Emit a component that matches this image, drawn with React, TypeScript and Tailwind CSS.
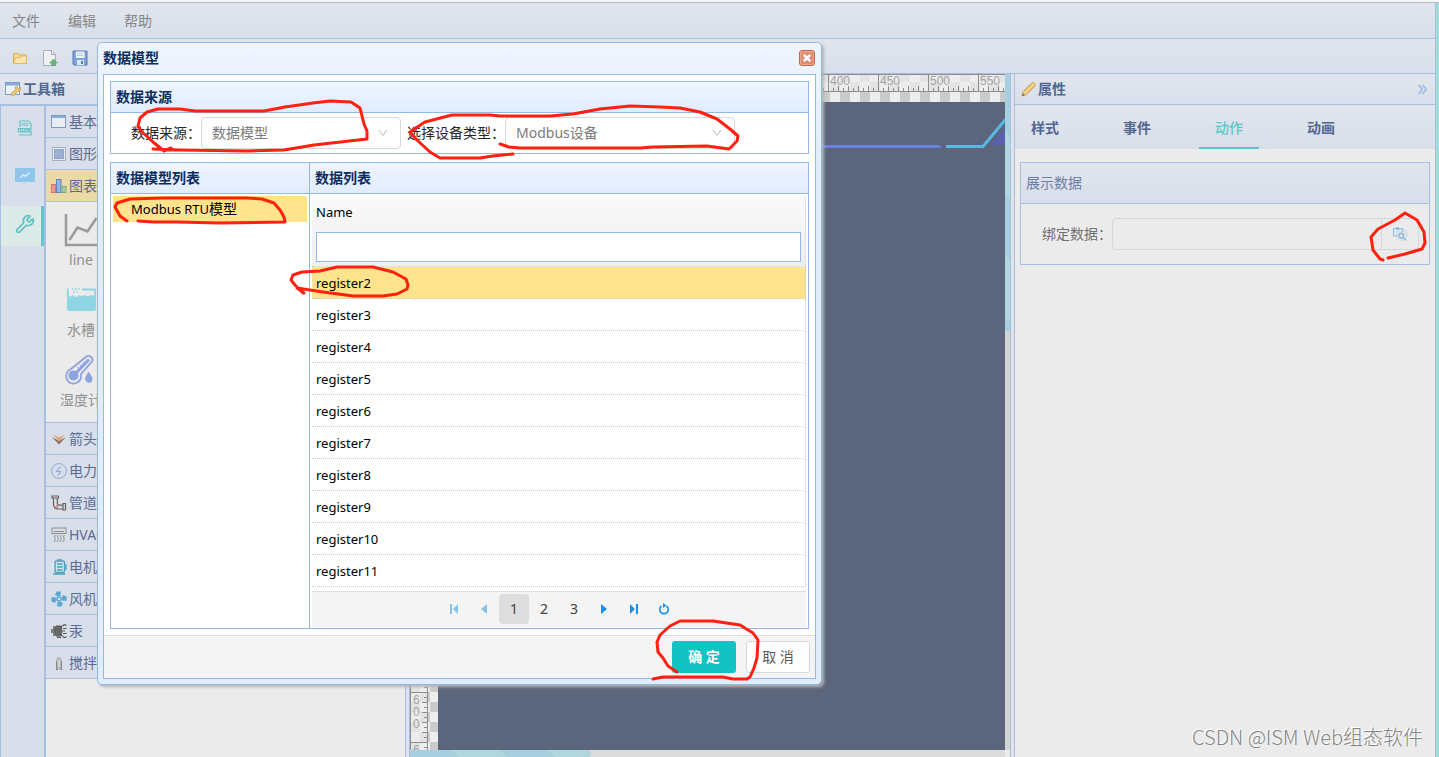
import type { ReactNode } from "react";
import { Wrench } from "lucide-react";
import { AiOutlineDoubleRight, AiOutlineDown } from "react-icons/ai";

const menus = ["文件", "编辑", "帮助"];

const registers = [2, 3, 4, 5, 6, 7, 8, 9, 10, 11].map((n) => `register${n}`);

const strokes = [
  "M171 148 L164 151 L153 142 L142 132 L138 126 L140 118 L147 112 L158 109 L180 109 L195 111 L264 111 L285 107 L313 103 L330 101 L351 102 L360 108 L364 124 L367 131 L367 139 L314 145 L284 150 L247 151 L180 150 L153 149",
  "M513 154 L493 156 L480 158 L440 158 L430 152 L417 140 L410 132 L425 122 L452 115 L490 115 L500 116 L550 116 L573 114 L600 109 L630 106 L660 107 L680 108 L700 112 L717 119 L730 129 L738 136 L737 141 L729 149 L707 146 L653 147 L640 148 L520 148 L509 147 L500 144",
  "M127 221 L120 216 L115 207 L117 203 L130 199 L163 198 L247 198 L262 199 L274 203 L280 210 L284 217 L285 222 L220 223 L177 222 L153 222 L138 221",
  "M303 293 L295 285 L291 280 L293 275 L302 272 L320 271 L337 267 L373 267 L393 272 L406 279 L408 285 L407 289 L397 294 L383 296 L353 296 L323 292 L297 288 L304 293",
  "M677 672 L668 666 L663 658 L658 652 L657 642 L660 635 L670 626 L680 621 L713 621 L740 625 L753 633 L758 640 L757 658 L754 668 L750 677 L747 679 L733 679 L723 677 L663 677 L653 679",
  "M1383 260 L1380 259 L1373 250 L1371 237 L1378 229 L1395 220 L1405 213 L1417 220 L1424 232 L1425 243 L1422 249 L1405 254 L1388 258",
];

function Annotations() {
  return (
    <svg className="pointer-events-none absolute top-0 left-0 z-20" width="1439" height="757" fill="none" stroke="#ff2010" strokeWidth="3" strokeLinejoin="round" strokeLinecap="round" aria-hidden="true">
      {strokes.map((d) => (
        <path key={d} d={d} />
      ))}
    </svg>
  );
}

function Svg({ size = 16, children }: { size?: number; children: ReactNode }) {
  return (
    <svg width={size} height={size} viewBox="0 0 16 16" fill="none" className="shrink-0" aria-hidden="true">
      {children}
    </svg>
  );
}

const FolderIcon = () => (
  <Svg>
    <path d="M1.5 13.5v-10h5l1 1.5h7v8.500z" fill="#f3d993" stroke="#d9ad58" />
    <path d="M1.500 13.500l2-6h5l1-1.500h5v7.500z" fill="#f8e6ae" stroke="#dfb766" />
  </Svg>
);

const PageIcon = () => (
  <Svg>
    <path d="M1.500 .500h8l4 4v11h-12z" fill="#eef0f2" stroke="#a9afb6" />
    <path d="M9.500 .500v4h4" stroke="#a9afb6" />
    <path d="M11.500 9l4 4h-2v2.500h-4v-2.500h-2z" fill="#6cb377" stroke="#5c9f68" strokeWidth=".6" />
  </Svg>
);

const SaveIcon = () => (
  <Svg>
    <path d="M1 1h14v14h-13l-1-1z" fill="#7fa2d8" stroke="#5379b8" />
    <rect x="4" y="1.500" width="8.500" height="6.500" fill="#eef3fa" />
    <path d="M5 3.500h6M5 5.500h6" stroke="#b9cbe6" />
    <rect x="5" y="10" width="7" height="5" fill="#dfe7f3" />
    <rect x="9" y="11" width="2" height="3" fill="#5379b8" />
  </Svg>
);

const ToolboxIcon = () => (
  <Svg>
    <rect x=".5" y="1.500" width="14" height="12" fill="#eef2f8" stroke="#7f9cc8" />
    <rect x="1" y="2" width="13" height="2.500" fill="#83abe0" />
    <path d="M7 15l-.5-3 4-3.500-.5-2.500 2-1 .5 2 2 .5 1-1.500.5 3-2 1.500-1.500-.2-3 3.700z" fill="#ecc77a" stroke="#cf9d4e" strokeWidth=".7" />
  </Svg>
);

const PencilIcon = () => (
  <Svg>
    <path d="M1 15l1.200-4.500 9-9c1-.8 3.800 1.800 3.200 3l-9 9z" fill="#f2d586" stroke="#cd9b55" />
    <path d="M3.500 10.500l8-8M5.500 12.500l8-8" stroke="#dfb865" />
    <path d="M1 15l.8-3 2.200 2.200z" fill="#8a6c50" />
  </Svg>
);

const CloseIcon = () => (
  <svg width="16" height="16" viewBox="0 0 16 16" fill="none" aria-hidden="true">
    <rect x=".5" y=".5" width="15" height="15" rx="2.500" fill="#e08c72" stroke="#b9684f" />
    <rect x="1.500" y="1.500" width="13" height="13" rx="1.500" stroke="#eda98f" />
    <path d="M4.800 4.800l6.400 6.400M11.200 4.800l-6.400 6.400" stroke="#fff" strokeWidth="2.600" />
  </svg>
);

const HtmlIcon = () => (
  <Svg>
    <path d="M3 7V1h8.500l2.500 2.500v11.500H3v-1" stroke="#63c3c3" strokeWidth="1.200" />
    <rect x=".8" y="8" width="12" height="4.500" fill="#63c3c3" />
    <path d="M2.500 9v2.500M4.500 9v2.500M2.500 10.300h2M5.500 9.300h2M6.500 9.300v2.200M8.300 11.500v-2l1 1 1-1v2" stroke="#dbe4ee" strokeWidth=".7" />
    <circle cx="8.300" cy="4.500" r="1.300" stroke="#63c3c3" />
    <path d="M6.500 3L5 4.500 6.500 6M10 3l1.500 1.500L10 6" stroke="#63c3c3" />
  </Svg>
);

const ScreenIcon = () => (
  <svg width="20" height="18" viewBox="0 0 20 18" fill="none" aria-hidden="true">
    <rect width="20" height="14" y="1" rx="1" fill="#90c5ec" />
    <path d="M5.500 10.500l3-3 2 2 4-4" stroke="#e2eef8" strokeWidth="1.200" />
    <path d="M10 15v1.500M7 17h6" stroke="#c1daef" />
  </svg>
);

const LineChartIcon = () => (
  <svg width="36" height="36" viewBox="0 0 36 36" fill="none" aria-hidden="true">
    <path d="M3 2v31h33" stroke="#9a9a9a" strokeWidth="2.500" />
    <path d="M6.500 28l8-12.500 10 4L33.500 6" stroke="#9a9a9a" strokeWidth="2.500" />
  </svg>
);

const TankIcon = () => (
  <svg width="36" height="36" viewBox="0 0 36 36" fill="none" aria-hidden="true">
    <path d="M4 13c2 2 4 2 6 0 2 2.500 4 2.500 6 0 2 1.500 3 1.500 5 0 3 1.500 5 1.500 7 0 2 1 3 1 5 0v14c0 1.500-1 2-2 2H6c-1 0-2-1-2-2z" fill="#8fd5e4" />
    <path d="M4.800 16V6.500M32.200 18V7.500H19" stroke="#8fd5e4" strokeWidth="1.800" />
    <path d="M9 7h1.500M12 7h1.500M15 7h1.500M10 10h1.500M13 9.500h1.500" stroke="#8fd5e4" strokeWidth="1.500" />
  </svg>
);

const HygrometerIcon = () => (
  <svg width="36" height="36" viewBox="0 0 36 36" fill="none" aria-hidden="true">
    <path d="M8 17L23.500 4.500c2.500-2 7.500 1.500 5.500 5L18 22c1 9-7 11-11.500 8.500C2 27 2 19.500 8 17z" stroke="#8ea3e0" strokeWidth="1.800" />
    <circle cx="10.500" cy="23.500" r="5" fill="#8ea3e0" />
    <path d="M11 23L26 7.500" stroke="#8ea3e0" strokeWidth="3" />
    <path d="M20 10l2 2M17 12.500l2 2M14 15l2 2" stroke="#8ea3e0" />
    <path d="M25.500 19.500c5 6.500 5 9.500 2 11-3 1-7-2-4.500-6.500z" fill="#8ea3e0" />
  </svg>
);

const BasicIcon = () => (
  <Svg>
    <rect x=".5" y="1.500" width="14" height="12" fill="#e9edf3" stroke="#8399c0" />
    <path d="M1 3h13" stroke="#83abe0" strokeWidth="2" />
  </Svg>
);

const ShapeIcon = () => (
  <Svg>
    <rect x="1.500" y="1.500" width="13" height="13" fill="#e6ebf3" stroke="#a3aec2" />
    <rect x="3.500" y="3.500" width="9" height="9" fill="#9db1d4" stroke="#8fa4ca" />
  </Svg>
);

const ChartIcon = () => (
  <Svg>
    <rect x=".5" y="6.500" width="4" height="8" fill="#ec9a96" stroke="#d37672" />
    <rect x="5.500" y="1.500" width="4.500" height="13" fill="#8fb4e2" stroke="#6286be" />
    <rect x="11" y="8.500" width="4" height="6" fill="#a5cf9c" stroke="#7eac76" />
  </Svg>
);

const ArrowsIcon = () => (
  <Svg>
    <path d="M2 3.500l6 3 6-3-6 6.500z" fill="#e5a26e" />
    <path d="M1 6l7 4 7-4-7 7.500z" fill="#7d6d66" />
    <path d="M5 7.500l3 2 3-2-3 3.500z" fill="#e5a26e" />
  </Svg>
);

const PowerIcon = () => (
  <Svg>
    <circle cx="8" cy="8" r="7.400" stroke="#8daad6" />
    <path d="M9.500 3.500L5.500 8.500h4l-2.500 4" stroke="#8daad6" strokeWidth="1.200" />
  </Svg>
);

const PipeIcon = () => (
  <Svg>
    <path d="M1 1h6.500v2H1zM2.500 3v6c0 3.500 1.500 5 5 5H12M6.300 3v5c0 1.500.7 2.200 2.200 2.200H12" stroke="#67605f" strokeWidth="1.200" />
    <path d="M12 8.500h2.500v6.500H12z" stroke="#67605f" strokeWidth="1.200" />
    <path d="M5 10.500l2 2" stroke="#e87d7d" strokeWidth="2" />
  </Svg>
);

const HvacIcon = () => (
  <Svg>
    <rect x="1" y="1" width="14" height="5.500" stroke="#8c8c8c" />
    <path d="M3 4.500h10" stroke="#8c8c8c" />
    <path d="M4.500 8c-2.500 2.500 1.500 3.500-1.500 7M7.500 8c-2.500 2.500 1.500 3.500-1.500 7M10.500 8c-2.500 2.500 1.500 3.500-1.500 7M13.500 8c-2.500 2.500 1.500 3.500-1.500 7" stroke="#8c8c8c" />
  </Svg>
);

const MotorIcon = () => (
  <Svg>
    <rect x="4" y="2" width="9.500" height="11.500" rx="1.500" fill="#cfe5ec" stroke="#4ba0bb" strokeWidth="1.400" />
    <path d="M6 5h5.500M6 8h5.500M6 11h5.500M15 5v6M6 .800h5M2 15h12" stroke="#4ba0bb" strokeWidth="1.300" />
    <path d="M1 4.500h2v7H1z" fill="#dfebf0" />
  </Svg>
);

const FanIcon = () => (
  <Svg>
    <path d="M7 5.500L4 4 5.500 .500h4.500L9.500 5zM10.500 7L12 4l3.500 1.500V10L11 9.500zM9 10.500l3 1.500-1.500 3.500H6l.5-4.500zM5.500 9L4 12 .500 10.500V6L5 6.500z" fill="#5aa9d2" />
    <circle cx="8" cy="8" r="2" fill="#dbe4ee" stroke="#5aa9d2" strokeWidth="1.400" />
  </Svg>
);

const PumpIcon = () => (
  <Svg>
    <path d="M1 6v4M3 3v10" stroke="#565656" strokeWidth="1.400" />
    <path d="M5 3h5.500v2.500H8.500v1.200H11v2.600H8.500v1.200h2V13H5c-1.500-3-1.500-7 0-10z" fill="#6a6a6a" stroke="#565656" />
    <path d="M11.500 3.500c.500-2.500 3.500-2.500 3.500-.5M12 5.500h3.500M12 8h2M12 10.500h3.500M11.500 12.500c.500 2.500 3 2.500 4 1M6 14.500h4" stroke="#565656" strokeWidth="1.200" />
  </Svg>
);

const MixerIcon = () => (
  <Svg>
    <path d="M8 1.500c2 1.500 3 3 3 5v8H5v-8c0-2 1-3.500 3-5z" fill="#b5b5b5" />
    <path d="M5.500 6.500v7M10.500 6.500v7M5 14.500h2M9.500 14.500h2" stroke="#858585" />
    <path d="M8 5v7" stroke="#e0e0e0" strokeWidth="1.500" />
  </Svg>
);

const BindIcon = () => (
  <Svg>
    <circle cx="9.500" cy="8.500" r="6.500" fill="#dcdfe4" />
    <path d="M10.500 6V2.500h-9v7.500h4" stroke="#8fc3ea" strokeWidth="1.200" />
    <path d="M4 2.500h3" stroke="#5eb0e8" strokeWidth="2" />
    <path d="M7 10c0-3 4-3.500 4.500-1s-2 4-4 2.500zM11 11.500l3.500 3" stroke="#7fbae8" strokeWidth="1.300" />
  </Svg>
);

const FirstIcon = () => (
  <svg width="10" height="10" viewBox="0 0 10 10" fill="currentColor" aria-hidden="true">
    <path d="M1 0h2v10H1zM9 0v10L4 5z" />
  </svg>
);
const PrevIcon = () => (
  <svg width="10" height="10" viewBox="0 0 10 10" fill="currentColor" aria-hidden="true">
    <path d="M8 0v10L2 5z" />
  </svg>
);
const NextIcon = () => (
  <svg width="10" height="10" viewBox="0 0 10 10" fill="currentColor" aria-hidden="true">
    <path d="M2 0v10l6-5z" />
  </svg>
);
const LastIcon = () => (
  <svg width="10" height="10" viewBox="0 0 10 10" fill="currentColor" aria-hidden="true">
    <path d="M7 0h2v10H7zM1 0v10l5-5z" />
  </svg>
);
const ReloadIcon = () => (
  <svg width="12" height="12" viewBox="0 0 12 12" fill="none" aria-hidden="true">
    <path d="M3.500 3A4.300 4.300 0 1 0 8.500 3" stroke="currentColor" strokeWidth="1.600" />
    <path d="M5 0v5l3.500-2.500z" fill="currentColor" />
  </svg>
);

const topCategories: [string, ReactNode][] = [
  ["基本", <BasicIcon />],
  ["图形", <ShapeIcon />],
  ["图表", <ChartIcon />],
];

const bottomCategories: [string, ReactNode][] = [
  ["箭头", <ArrowsIcon />],
  ["电力", <PowerIcon />],
  ["管道", <PipeIcon />],
  ["HVAC", <HvacIcon />],
  ["电机", <MotorIcon />],
  ["风机", <FanIcon />],
  ["汞", <PumpIcon />],
  ["搅拌", <MixerIcon />],
];

const widgets: [string, ReactNode][] = [
  ["line", <LineChartIcon />],
  ["水槽", <TankIcon />],
  ["湿度计", <HygrometerIcon />],
];

function Category({ label, icon, active = false }: { label: string; icon: ReactNode; active?: boolean }) {
  return (
    <button
      type="button"
      className={`flex h-8 w-full items-center gap-[2px] border-b border-[#a9bfdf] pl-[5px] text-[#5a6b93] ${
        active ? "bg-[#ebdaa6]" : "bg-[#d9dfea]"
      }`}
    >
      {icon}
      {label}
    </button>
  );
}

function Toolbox() {
  return (
    <aside className="flex w-[406px] shrink-0 flex-col border-r border-[#a9bfdf]">
      <h2 className="flex h-[31px] shrink-0 items-center gap-[2px] border-b border-[#a9bfdf] bg-linear-to-b from-[#e1e5ed] to-[#d8dfeb] pl-[5px] font-bold text-[#4f6791]">
        <ToolboxIcon />
        工具箱
      </h2>
      <div className="flex min-h-0 flex-1 border-t border-l border-[#a9bfdf]">
        <nav className="flex w-11 shrink-0 flex-col gap-2 border-r border-[#a9bfdf] bg-[#d9dfea] pt-1">
          <button type="button" aria-label="HTML" className="flex h-10 items-center justify-center pb-1 pl-1">
            <HtmlIcon />
          </button>
          <button type="button" aria-label="Screen" className="flex h-10 items-center justify-center pb-1 pl-1">
            <ScreenIcon />
          </button>
          <button type="button" aria-label="Tools" className="flex h-10 items-center justify-center border-r-[3px] border-[#63c6c8] bg-[#dceae8] pb-1 pl-2">
            <Wrench size={20} strokeWidth={2} className="text-[#5cc2c2]" />
          </button>
        </nav>
        <div className="flex-1 border-l border-[#a9bfdf]">
          {topCategories.map(([label, icon]) => (
            <Category key={label} label={label} icon={icon} active={label === "图表"} />
          ))}
          <div className="border-b border-[#a9bfdf] pb-[10px]">
            {widgets.map(([label, icon]) => (
              <button type="button" key={label} className="flex w-[70px] flex-col items-center pt-[10px] leading-6 whitespace-nowrap text-[#8f8f8f]">
                {icon}
                {label}
              </button>
            ))}
          </div>
          {bottomCategories.map(([label, icon]) => (
            <Category key={label} label={label} icon={icon} />
          ))}
        </div>
      </div>
    </aside>
  );
}

function HorizontalRuler() {
  const majors = Array.from({ length: 12 }, (_, i) => i * 50);
  return (
    <svg width="100%" height="18" className="block" aria-hidden="true">
      <rect width="100%" height="18" fill="#ececec" fillOpacity=".7" />
      <path d="M0 .500H600M0 17.500H600" stroke="#8d8d8d" />
      {Array.from({ length: 116 }, (_, i) => (
        <path key={i} d={`M${18.5 + i * 5} ${i % 2 ? 14 : 12}V17`} stroke="#8d8d8d" />
      ))}
      {majors.map((m) => (
        <g key={m}>
          <path d={`M${18.5 + m} 0V18`} stroke="#8d8d8d" />
          <text x={20 + m} y="11" fontSize="12" fill="#a3a3a3" fontFamily="Liberation Sans">
            {m}
          </text>
        </g>
      ))}
    </svg>
  );
}

function VerticalRuler() {
  const majors = Array.from({ length: 14 }, (_, i) => i * 50);
  return (
    <svg width="18" height="100%" className="block shrink-0" aria-hidden="true">
      <rect width="18" height="100%" fill="#ececec" fillOpacity=".7" />
      <path d="M.500 0V700M17.500 0V700" stroke="#8d8d8d" />
      {Array.from({ length: 134 }, (_, i) => (
        <path key={i} d={`M${i % 2 ? 14 : 12} ${0.5 + i * 5}H17`} stroke="#8d8d8d" />
      ))}
      {majors.map((m) => (
        <g key={m}>
          <path d={`M0 ${0.5 + m}H18`} stroke="#8d8d8d" />
          {String(m)
            .split("")
            .filter((_, i) => m < 650 || i === 0)
            .map((c, i) => (
              <text key={i} x="3" y={m + 12 + i * 12} fontSize="12" fill="#a3a3a3" fontFamily="Liberation Sans">
                {c}
              </text>
            ))}
        </g>
      ))}
    </svg>
  );
}

function Workspace() {
  return (
    <main className="flex min-w-0 flex-1 flex-col">
      <div className="flex min-h-0 flex-1">
        <div className="flex min-w-0 flex-1 flex-col bg-[repeating-conic-gradient(#cbcbcb_0_25%,#ededed_0_50%)] bg-[length:20px_20px] bg-[position:10px_8px]">
          <HorizontalRuler />
          <div className="flex min-h-0 flex-1">
            <VerticalRuler />
            <div className="min-w-0 flex-1 overflow-hidden pt-[10px] pl-[10px]">
              <div className="h-full bg-[#5b667d]">
                <svg width="567" height="60" className="block" fill="none" aria-hidden="true">
                  <path d="M552 43L567 26V43z" fill="#5a5fae" />
                  <path d="M0 43H501l3 3H0z" fill="#6b80e4" />
                  <path d="M508 44.500H545L568 17" stroke="#58b8e6" strokeWidth="3" />
                </svg>
              </div>
            </div>
          </div>
        </div>
        <div className="w-[5px] shrink-0 bg-[#d4d4d4]">
          <div className="h-[257px] rounded-b-[2px] bg-[repeating-linear-gradient(225deg,#a6cfdf_0_44px,#b2d6de_44px_88px)]" />
        </div>
      </div>
      <div className="mr-[5px] h-[7px] shrink-0 overflow-hidden rounded-t-[2px] bg-[#dcdcdc]">
        <div className="h-full w-[181px] rounded-r-[4px] bg-[repeating-linear-gradient(45deg,#a6cfdf_0_34px,#b2d6de_34px_68px)]" />
      </div>
    </main>
  );
}

const tabs = ["样式", "事件", "动作", "动画"];

function Properties() {
  return (
    <aside className="flex w-[422px] shrink-0 flex-col border-x border-[#a9bfdf]">
      <header className="flex h-[31px] items-center justify-between border-b border-[#a9bfdf] bg-linear-to-b from-[#e1e5ed] to-[#d8dfeb] px-[6px]">
        <h2 className="flex items-center gap-[1px] font-bold text-[#4f6791]">
          <PencilIcon />
          属性
        </h2>
        <button type="button" aria-label="Collapse" className="text-[#8db8e2]">
          <AiOutlineDoubleRight size={13} stroke="currentColor" strokeWidth={30} />
        </button>
      </header>
      <div role="tablist" className="flex h-11 gap-8 bg-linear-to-b from-[#e1e5ed] to-[#d8dfeb]">
        {tabs.map((tab) => (
          <button
            type="button"
            role="tab"
            key={tab}
            aria-selected={tab === "动作"}
            className={`w-[60px] border-b-2 pt-1 ${
              tab === "动作" ? "border-[#5cc5c8] font-medium text-[#5cc5c8]" : "border-transparent font-bold text-[#4f6791]"
            }`}
          >
            {tab}
          </button>
        ))}
      </div>
      <section className="mx-[5px] mt-[13px] border border-[#a9bfdf]">
        <h3 className="flex h-[41px] items-center border-b border-[#a9bfdf] bg-linear-to-b from-[#e1e5ed] to-[#d8dfeb] pl-[5px] text-[#6b7fa3]">展示数据</h3>
        <div className="flex h-[60px] items-center pr-[10px] pl-[21px] text-[#707070]">
          <label htmlFor="bind" className="w-[70px]">绑定数据：</label>
          <div className="flex h-8 flex-1 rounded-[4px] border border-[#d6d6d6]">
            <input id="bind" type="text" className="min-w-0 flex-1 bg-transparent px-3 outline-none" />
            <button type="button" aria-label="Browse" className="flex w-[37px] items-center justify-center border-l border-[#d6d6d6]">
              <BindIcon />
            </button>
          </div>
        </div>
      </section>
    </aside>
  );
}

const panelHead = "flex h-[31px] items-center border-b border-[#95b8e7] bg-linear-to-b from-[#eff5ff] to-[#e0ecff] pl-[5px] font-bold text-[#0e2d5f]";

function DialogSelect({ id, label, value, widthClass }: { id: string; label: string; value: string; widthClass: string }) {
  return (
    <div className="flex items-center">
      <label htmlFor={id} className="text-[#262626]">{label}</label>
      <div className={`relative ${widthClass}`}>
        <select id={id} className="h-8 w-full appearance-none rounded-[4px] border border-[#d9d9d9] bg-white pr-8 pl-[10px] text-[#7a7a7a]">
          <option>{value}</option>
        </select>
        <AiOutlineDown size={12} className="pointer-events-none absolute top-[10px] right-[12px] text-[#bfbfbf]" />
      </div>
    </div>
  );
}

function ModelDialog() {
  return (
    <div
      role="dialog"
      aria-label="数据模型"
      className="absolute top-[42px] left-[97px] z-10 w-[725px] rounded-[5px] border border-[#95b8e7] bg-linear-to-b from-[#eff5ff] to-[#e0ecff] to-20% px-[5px] pb-[5px] shadow-[2px_2px_3px_#b5b5b0]"
    >
      <header className="flex h-[31px] items-center justify-between pb-[2px]">
        <h1 className="font-bold text-[#0e2d5f]">数据模型</h1>
        <button type="button" aria-label="Close" className="mr-[1px]"><CloseIcon /></button>
      </header>
      <div className="border border-[#95b8e7] bg-white">
        <div className="flex flex-col gap-2 p-[6px]">
          <section className="border border-[#95b8e7]">
            <h2 className={panelHead}>数据来源</h2>
            <div className="flex h-10 items-center gap-[6px] pl-5">
              <DialogSelect id="source" label="数据来源：" value="数据模型" widthClass="w-[200px]" />
              <DialogSelect id="device" label="选择设备类型：" value="Modbus设备" widthClass="w-[230px]" />
            </div>
          </section>
          <div className="flex border border-[#95b8e7]">
            <section className="w-[199px] border-r border-[#95b8e7]">
              <h2 className={panelHead}>数据模型列表</h2>
              <ul className="p-[2px]">
                <li className="h-[26px] bg-[#ffe48d] pl-[18px] leading-[26px] text-black">
                  <span className="text-[13px]">Modbus RTU</span>模型
                </li>
              </ul>
            </section>
            <section className="flex-1">
              <h2 className={panelHead}>数据列表</h2>
              <div className="px-[2px] pt-[2px] pb-[1px]">
                <table className="w-full border-separate border-spacing-0 text-left text-[13px] text-black">
                  <thead>
                    <tr>
                      <th className="h-[71px] border-r border-b border-dotted border-[#ccc] bg-linear-to-b from-[#f9f9f9] to-[#efefef] p-0 pr-1 pl-1 align-top font-normal">
                        <label htmlFor="filter" className="block h-9 leading-8">Name</label>
                        <input id="filter" type="text" className="block h-[30px] w-full border border-[#95b8e7] bg-white px-1 outline-none" />
                      </th>
                    </tr>
                  </thead>
                  <tbody>
                    {registers.map((name, i) => (
                      <tr key={name} className={i === 0 ? "bg-[#ffe48d]" : ""}>
                        <td className="h-8 border-r border-b border-dotted border-[#ccc] p-0 pl-1">{name}</td>
                      </tr>
                    ))}
                  </tbody>
                </table>
                <nav className="mt-1 flex justify-center border-t border-[#ddd] bg-[#f4f4f4] pt-[2px] pb-[3px] text-[#404040]">
                  <button type="button" aria-label="First" className="flex size-[30px] items-center justify-center text-[#87c2ef]"><FirstIcon /></button>
                  <button type="button" aria-label="Previous" className="flex size-[30px] items-center justify-center text-[#87c2ef]"><PrevIcon /></button>
                  <button type="button" className="size-[30px] rounded-[4px] bg-[#ddd]">1</button>
                  <button type="button" className="size-[30px]">2</button>
                  <button type="button" className="size-[30px]">3</button>
                  <button type="button" aria-label="Next" className="flex size-[30px] items-center justify-center text-[#1890e8]"><NextIcon /></button>
                  <button type="button" aria-label="Last" className="flex size-[30px] items-center justify-center text-[#1890e8]"><LastIcon /></button>
                  <button type="button" aria-label="Reload" className="flex size-[30px] items-center justify-center text-[#1890e8]"><ReloadIcon /></button>
                </nav>
              </div>
            </section>
          </div>
        </div>
        <footer className="flex h-[43px] items-center justify-end gap-[10px] border-t border-[#ddd] bg-[#f4f4f4] pr-[5px]">
          <button type="button" className="h-8 w-16 rounded-[3px] bg-[#13c2c2] font-bold text-white">确 定</button>
          <button type="button" className="h-8 w-16 rounded-[3px] border border-[#d9d9d9] bg-white text-[#595959]">取 消</button>
        </footer>
      </div>
    </div>
  );
}

export default function App() {
  return (
    <div className="relative flex h-screen flex-col overflow-hidden bg-[#ebebeb] font-['Noto_Sans','Noto_Sans_CJK_SC',sans-serif] text-[14px] leading-5">
      <div className="h-[3px] shrink-0 border-b border-[#b5bcc8] bg-[#f5f5f5]" />
      <div className="flex min-h-0 flex-1">
        <div className="flex min-w-0 flex-1 flex-col">
          <div className="shrink-0 border-r border-[#a9bfdf]">
            <nav className="flex h-9 items-center gap-7 border-b border-[#a9bfdf] bg-linear-to-b from-[#e1e5ed] to-[#d8dfeb] pl-3 text-[#858585]">
              {menus.map((m) => (
                <button type="button" key={m}>{m}</button>
              ))}
            </nav>
            <div className="flex h-[35px] items-center gap-[14px] border-b border-[#a9bfdf] bg-linear-to-b from-[#e1e5ed] to-[#d8dfeb] pt-1 pl-3">
              <button type="button" aria-label="Open"><FolderIcon /></button>
              <button type="button" aria-label="Import"><PageIcon /></button>
              <button type="button" aria-label="Save"><SaveIcon /></button>
            </div>
          </div>
          <div className="flex min-h-0 flex-1">
            <Toolbox />
            <div className="w-1 shrink-0 border-r border-[#a9bfdf] bg-[#dfe3ea]" />
            <Workspace />
            <div className="w-1 shrink-0 border-l border-[#a9bfdf] bg-[#dfe3ea]" />
            <Properties />
          </div>
        </div>
        <div className="w-[3px] shrink-0 bg-[#a3dbd8]" />
      </div>
      <ModelDialog />
      <Annotations />
      <p className="absolute right-4 bottom-1 z-10 font-['Noto_Sans_CJK_SC',sans-serif] text-[20px] leading-8 font-light text-[#858585] [text-shadow:-1px_-1px_0_#fff]">
        CSDN @ISM Web组态软件
      </p>
    </div>
  );
}
